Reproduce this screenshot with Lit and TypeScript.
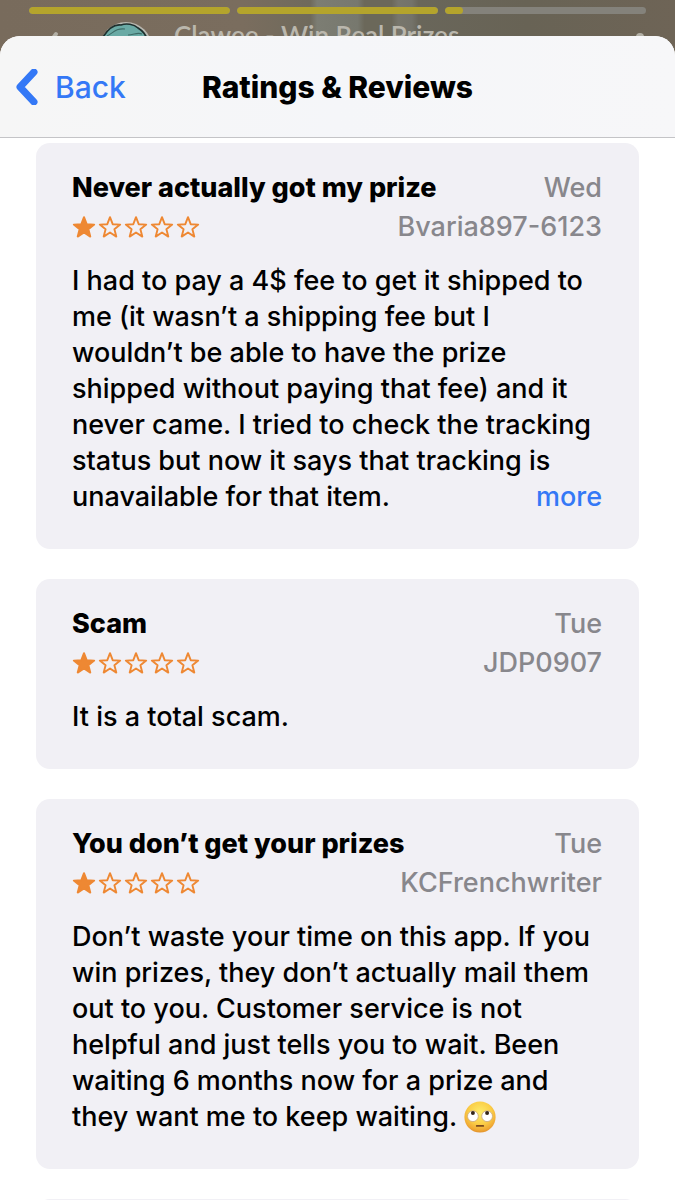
import { LitElement, html, css, svg } from "lit";
import { customElement, property } from "lit/decorators.js";

interface Review {
  title: string;
  date: string;
  author: string;
  rating: number;
  text: string;
  truncated?: boolean;
  emoji?: boolean;
}

const REVIEWS: Review[] = [
  {
    title: "Never actually got my prize",
    date: "Wed",
    author: "Bvaria897-6123",
    rating: 1,
    text: "I had to pay a 4$ fee to get it shipped to me (it wasn’t a shipping fee but I wouldn’t be able to have the prize shipped without paying that fee) and it never came. I tried to check the tracking status but now it says that tracking is unavailable for that item.",
    truncated: true,
  },
  { title: "Scam", date: "Tue", author: "JDP0907", rating: 1, text: "It is a total scam." },
  {
    title: "You don’t get your prizes",
    date: "Tue",
    author: "KCFrenchwriter",
    rating: 1,
    text: "Don’t waste your time on this app. If you win prizes, they don’t actually mail them out to you. Customer service is not helpful and just tells you to wait. Been waiting 6 months now for a prize and they want me to keep waiting.",
    emoji: true,
  },
];

const STAR = "M12 2.2 14.7 9.2 22.2 9.6 16.4 14.3 18.3 21.6 12 17.5 5.7 21.6 7.6 14.3 1.8 9.6 9.3 9.2Z";

@customElement("star-rating")
export class StarRating extends LitElement {
  @property({ type: Number }) value = 0;

  static styles = css`
    :host {
      display: flex;
      gap: 2px;
    }
    .star {
      width: 24px;
      height: 24px;
      fill: none;
      stroke: #ee8833;
      stroke-width: 1.9;
      stroke-linejoin: round;
    }
    .filled {
      fill: #ee8833;
    }
  `;

  render() {
    return [1, 2, 3, 4, 5].map(
      (n) => html`<svg class="star ${n <= this.value ? "filled" : ""}" viewBox="0 0 24 24" aria-hidden="true">
        ${svg`<path d=${STAR}></path>`}
      </svg>`
    );
  }
}

@customElement("review-card")
export class ReviewCard extends LitElement {
  @property({ attribute: false }) review!: Review;

  static styles = css`
    :host {
      display: block;
      background: #f1f0f5;
      border-radius: 14px;
      padding: 25px 37px 34px 36px;
    }
    .row {
      display: flex;
      justify-content: space-between;
      align-items: center;
      gap: 16px;
      height: 39px;
    }
    .title {
      margin: 0;
      font-size: 27px;
      font-weight: 800;
    }
    .meta {
      color: #88878c;
      font-weight: 500;
    }
    .text {
      margin: 17px 0 0;
      line-height: 36px;
      font-weight: 500;
    }
    .more {
      float: right;
      padding: 0;
      border: 0;
      background: none;
      color: #3478f6;
      font: inherit;
      line-height: 36px;
    }
    .emoji {
      width: 32px;
      height: 32px;
      vertical-align: -7px;
    }
  `;

  render() {
    const r = this.review;
    return html`
      <div class="row">
        <h2 class="title">${r.title}</h2>
        <span class="meta">${r.date}</span>
      </div>
      <div class="row">
        <star-rating role="img" aria-label="${r.rating} out of 5 stars" .value=${r.rating}></star-rating>
        <span class="meta">${r.author}</span>
      </div>
      <p class="text">${r.text}${r.emoji ? html` ${this.eyeRoll()}` : ""}${r.truncated
          ? html`<button class="more" type="button">more</button>`
          : ""}</p>
    `;
  }

  private eyeRoll() {
    return html`<svg class="emoji" viewBox="0 0 32 32" role="img" aria-label="Face with rolling eyes">
      <defs>
        <radialGradient id="face" cx="50%" cy="36%" r="66%">
          <stop offset="0" stop-color="#fdec6a"></stop>
          <stop offset="0.55" stop-color="#fbcf48"></stop>
          <stop offset="0.85" stop-color="#f0a934"></stop>
          <stop offset="1" stop-color="#dd8a2a"></stop>
        </radialGradient>
      </defs>
      <circle cx="16" cy="16" r="15.6" fill="url(#face)"></circle>
      <circle cx="8.9" cy="15.2" r="5.4" fill="#fff" stroke="#c9a77c" stroke-width=".8"></circle>
      <circle cx="23.1" cy="15.2" r="5.4" fill="#fff" stroke="#c9a77c" stroke-width=".8"></circle>
      <circle cx="8.9" cy="11.9" r="2" fill="#34251b"></circle>
      <circle cx="23.1" cy="11.9" r="2" fill="#34251b"></circle>
      <path d="M12.8 24.9h6.4" stroke="#7b4a1e" stroke-width="1.9" stroke-linecap="round"></path>
    </svg>`;
  }
}

@customElement("story-backdrop")
export class StoryBackdrop extends LitElement {
  static styles = css`
    :host {
      display: block;
      padding: 7px 29px 0;
      background: linear-gradient(90deg, #786b5c 0, #7a6d5e 36%, #6f6a5c 46%, #7c7d73 47%, #77786e 53%, #6b685a 54%, #6b685a 58%, #77766c 59%, #74736a 61%, #69665a 62%, #686355 78%, #6e6456 100%);
    }
    .bars {
      display: grid;
      grid-template-columns: repeat(3, 1fr);
      gap: 7px;
    }
    .bar {
      height: 7px;
      border-radius: 4px;
      background: #84827b;
      overflow: hidden;
    }
    .fill {
      height: 100%;
      border-radius: 4px;
      background: #b4a42c;
    }
    .head {
      display: flex;
      align-items: flex-start;
      margin-top: 8px;
    }
    .back {
      width: 20px;
      height: 36px;
      margin: 9px 0 0 15px;
    }
    .avatar {
      width: 52px;
      height: 52px;
      margin-left: 36px;
    }
    .name {
      flex: 1;
      margin-left: 22px;
      color: #bab7ad;
      font: 600 26px/26px "Lato", sans-serif;
      white-space: nowrap;
    }
    .dots {
      width: 10px;
      height: 36px;
      margin: 10px 0 0;
    }
  `;

  render() {
    return html`
      <div class="bars">
        ${[100, 100, 9].map((p) => html`<div class="bar"><div class="fill" style="width:${p}%"></div></div>`)}
      </div>
      <div class="head">
        <svg class="back" viewBox="0 0 20 36" aria-hidden="true">
          <path d="M12 3 4 14l8 11" fill="none" stroke="#b3b0a6" stroke-width="4" stroke-linecap="round"></path>
        </svg>
        <svg class="avatar" viewBox="0 0 52 52" aria-hidden="true">
          <circle cx="26" cy="26" r="26" fill="#b9b7b0"></circle>
          <circle cx="26" cy="26" r="24" fill="#4d8985"></circle>
          <path d="M3 15C8 7 14 2 21 3c5-2 13-1 17 3 5 3 8 7 9 12H3Z" fill="#6aaaa5" stroke="#1f302e" stroke-width="1.6"></path>
          <path d="M7 14c6-3 9-8 18-7M28 13c6 0 9-3 14-1" fill="none" stroke="#3c6b67" stroke-width="1.1"></path>
        </svg>
        <span class="name">Clawee - Win Real Prizes</span>
        <svg class="dots" viewBox="0 0 10 36" aria-hidden="true">
          <circle cx="4" cy="5" r="4" fill="#b3b0a6"></circle>
          <circle cx="4" cy="17" r="4" fill="#b3b0a6"></circle>
        </svg>
      </div>
    `;
  }
}

@customElement("app-root")
export class AppRoot extends LitElement {
  static styles = css`
    :host {
      position: relative;
      display: flex;
      flex-direction: column;
      box-sizing: border-box;
      height: 100vh;
      padding-top: 36px;
      overflow: hidden;
      font-family: "Inter", sans-serif;
      font-size: 27px;
      color: #000;
    }
    .backdrop {
      position: absolute;
      inset: 0;
    }
    .sheet {
      position: relative;
      flex: 1;
      min-height: 0;
      display: flex;
      flex-direction: column;
      border-radius: 20px 20px 0 0;
      background: #fff;
      overflow: hidden;
    }
    .nav {
      flex: none;
      display: grid;
      grid-template-columns: 1fr auto 1fr;
      align-items: center;
      height: 101px;
      padding: 0 15px;
      background: linear-gradient(90deg, #f6f6f6, #f5f6f9 50%, #f7f7f9);
      border-bottom: 1px solid #c4c4c7;
    }
    .back {
      justify-self: start;
      display: flex;
      align-items: center;
      gap: 16px;
      padding: 0;
      border: 0;
      background: none;
      color: #3478f6;
      font: inherit;
      font-size: 30px;
      font-weight: 500;
    }
    .chevron {
      width: 24px;
      height: 36px;
      fill: none;
      stroke: #3478f6;
      stroke-width: 7;
      stroke-linecap: round;
      stroke-linejoin: round;
    }
    .heading {
      margin: 0;
      font-size: 30px;
      font-weight: 800;
    }
    .list {
      flex: 1;
      min-height: 0;
      display: flex;
      flex-direction: column;
      gap: 30px;
      padding: 5px 36px 0;
      overflow-y: auto;
      scrollbar-width: none;
    }
    .card {
      flex: none;
    }
    .next {
      flex: none;
      height: 190px;
      border-radius: 14px;
      background: #f1f0f5;
    }
  `;

  render() {
    return html`
      <story-backdrop class="backdrop"></story-backdrop>
      <main class="sheet">
        <header class="nav">
          <button class="back" type="button">
            <svg class="chevron" viewBox="0 0 24 36" aria-hidden="true"><path d="M19 3 5 18l14 15"></path></svg>
            Back
          </button>
          <h1 class="heading">Ratings &amp; Reviews</h1>
        </header>
        <section class="list">
          ${REVIEWS.map((r) => html`<review-card class="card" .review=${r}></review-card>`)}
          <div class="next"></div>
        </section>
      </main>
    `;
  }
}
